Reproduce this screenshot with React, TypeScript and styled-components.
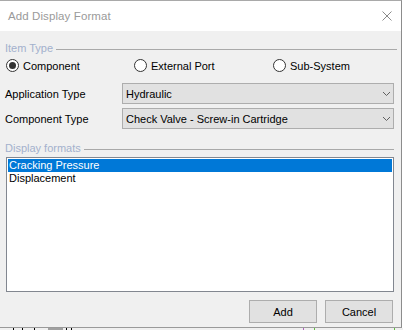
import React, { useState } from 'react'
import styled, { createGlobalStyle } from 'styled-components'

const GlobalStyle = createGlobalStyle`
  html, body {
    margin: 0;
    padding: 0;
    background: #ffffff;
  }
  body {
    font-family: 'Liberation Sans', Arial, sans-serif;
    font-size: 11px;
    color: #000;
  }
`

const Screen = styled.div`
  width: 403px;
  height: 330px;
  display: flex;
  flex-direction: column;
  overflow: hidden;
  background: #ffffff;
`

const Window = styled.div`
  width: 402px;
  height: 328px;
  box-sizing: border-box;
  border-top: 1px solid #a9a9a9;
  border-right: 1px solid #8c8c8c;
  border-bottom: 1px solid #9a9a9a;
  display: flex;
  flex-direction: column;
  background: #f0f0f0;
`

const TitleBar = styled.div`
  height: 30px;
  flex: none;
  background: #ffffff;
  display: flex;
  align-items: center;
  justify-content: space-between;
  padding: 0 9px 0 8px;
`

const Title = styled.span`
  font-size: 11.5px;
  color: #9a9a9a;
  letter-spacing: 0.1px;
`

const CloseButton = styled.button`
  border: 0;
  background: transparent;
  padding: 0;
  width: 10px;
  height: 10px;
  display: flex;
  cursor: pointer;
`

const Body = styled.div`
  flex: 1;
  display: flex;
  flex-direction: column;
  padding-left: 5px;
`

const GroupHeader = styled.div<{ $top: number; $right: number }>`
  display: flex;
  align-items: center;
  height: 14px;
  margin-top: ${p => p.$top}px;
  margin-right: ${p => p.$right}px;
`

const GroupLabel = styled.span`
  color: #a3b1cd;
  white-space: nowrap;
`

const GroupLine = styled.div`
  flex: 1;
  height: 1px;
  margin: 2px 0 0 3px;
  background: #a9a9a9;
`

const RadioRow = styled.div`
  display: grid;
  grid-template-columns: 128px 139px auto;
  height: 15px;
  margin-top: 3px;
  padding-left: 1px;
  align-items: center;
`

const RadioOption = styled.label`
  display: flex;
  align-items: center;
  gap: 4px;
  cursor: default;
`

const RadioCircle = styled.span<{ $checked: boolean }>`
  width: 13px;
  height: 13px;
  box-sizing: border-box;
  border: 1px solid #333333;
  border-radius: 50%;
  background: #ffffff;
  display: flex;
  align-items: center;
  justify-content: center;

  &::after {
    content: '';
    width: 7px;
    height: 7px;
    border-radius: 50%;
    background: #333333;
    display: ${p => (p.$checked ? 'block' : 'none')};
  }
`

const FieldRow = styled.div<{ $top: number }>`
  display: grid;
  grid-template-columns: 117px 272px;
  height: 21px;
  align-items: center;
  margin-top: ${p => p.$top}px;
`

const Combo = styled.div`
  height: 21px;
  box-sizing: border-box;
  border: 1px solid #adadad;
  background: #e1e1e1;
  display: flex;
  align-items: center;
  justify-content: space-between;
  padding: 0 2px 0 3px;
`

const ListBox = styled.div`
  margin: 2px 0 0 1px;
  width: 388px;
  height: 135px;
  box-sizing: border-box;
  border: 1px solid #828790;
  background: #ffffff;
  padding: 1px;
`

const ListItem = styled.div<{ $selected: boolean }>`
  height: 13px;
  line-height: 13px;
  padding-left: 1px;
  background: ${p => (p.$selected ? '#0078d7' : 'transparent')};
  color: ${p => (p.$selected ? '#ffffff' : '#000000')};
`

const ButtonRow = styled.div`
  display: flex;
  justify-content: flex-end;
  gap: 8px;
  margin: 8px 8px 0 0;
`

const Button = styled.button`
  width: 68px;
  height: 23px;
  box-sizing: border-box;
  border: 1px solid #adadad;
  background: #e1e1e1;
  font-family: inherit;
  font-size: 11px;
  color: #000;
  padding: 0;
`

const Strip = styled.div`
  height: 2px;
  display: flex;
  background: #f0f0f0;
`

const Mark = styled.span<{ $gap: number; $w: number; $c: string }>`
  margin-left: ${p => p.$gap}px;
  width: ${p => p.$w}px;
  background: ${p => p.$c};
`

const Chevron = () => (
  <svg width="9" height="6" viewBox="0 0 9 6">
    <path d="M1 1 L4.5 4.5 L8 1" fill="none" stroke="#606060" strokeWidth="1" />
  </svg>
)

const CloseIcon = () => (
  <svg width="10" height="10" viewBox="0 0 10 10">
    <path d="M0.5 0.5 L9.5 9.5 M9.5 0.5 L0.5 9.5" stroke="#8a8a8a" strokeWidth="1" />
  </svg>
)

const itemTypes = ['Component', 'External Port', 'Sub-System']
const formats = ['Cracking Pressure', 'Displacement']

const App: React.FC = () => {
  const [itemType, setItemType] = useState<string>('Component')
  const [selected, setSelected] = useState<number>(0)

  return (
    <Screen>
      <GlobalStyle />
      <Window>
        <TitleBar>
          <Title>Add Display Format</Title>
          <CloseButton aria-label="Close">
            <CloseIcon />
          </CloseButton>
        </TitleBar>

        <Body>
          <GroupHeader $top={10} $right={4}>
            <GroupLabel>Item Type</GroupLabel>
            <GroupLine />
          </GroupHeader>

          <RadioRow>
            {itemTypes.map(t => (
              <RadioOption key={t} onClick={() => setItemType(t)}>
                <RadioCircle $checked={itemType === t} />
                {t}
              </RadioOption>
            ))}
          </RadioRow>

          <FieldRow $top={10}>
            <span>Application Type</span>
            <Combo>
              <span>Hydraulic</span>
              <Chevron />
            </Combo>
          </FieldRow>

          <FieldRow $top={4}>
            <span>Component Type</span>
            <Combo>
              <span>Check Valve - Screw-in Cartridge</span>
              <Chevron />
            </Combo>
          </FieldRow>

          <GroupHeader $top={12} $right={7}>
            <GroupLabel>Display formats</GroupLabel>
            <GroupLine />
          </GroupHeader>

          <ListBox>
            {formats.map((f, i) => (
              <ListItem key={f} $selected={selected === i} onClick={() => setSelected(i)}>
                {f}
              </ListItem>
            ))}
          </ListBox>

          <ButtonRow>
            <Button>Add</Button>
            <Button>Cancel</Button>
          </ButtonRow>
        </Body>
      </Window>
      <Strip>
        <Mark $gap={13} $w={1} $c="#000" />
        <Mark $gap={8} $w={1} $c="#000" />
        <Mark $gap={11} $w={1} $c="#000" />
        <Mark $gap={13} $w={15} $c="#a0a0a0" />
        <Mark $gap={3} $w={1} $c="#000" />
        <Mark $gap={4} $w={1} $c="#000" />
        <Mark $gap={231} $w={1} $c="#b060c0" />
        <Mark $gap={10} $w={1} $c="#60c040" />
        <Mark $gap={79} $w={1} $c="#60c040" />
      </Strip>
    </Screen>
  )
}

export default App
